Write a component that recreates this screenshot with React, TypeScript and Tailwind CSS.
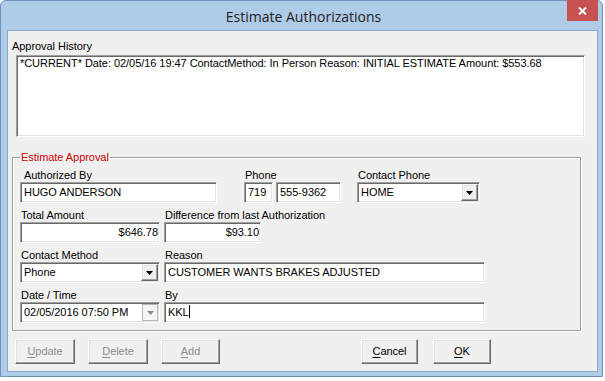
const sunken =
  "bg-white border border-t-[#a0a0a0] border-l-[#a0a0a0] border-b-white border-r-white shadow-[inset_1px_1px_0_#696969,inset_-1px_-1px_0_#e3e3e3]";
const raised =
  "bg-[#f0f0f0] border border-t-white border-l-white border-b-[#696969] border-r-[#696969] shadow-[inset_-1px_-1px_0_#a0a0a0,inset_1px_1px_0_#e3e3e3]";

function Field({ label, className, children }: { label: string; className?: string; children: React.ReactNode }) {
  return (
    <div className={"flex flex-col " + (className ?? "")}>
      <div className="h-[14px] leading-[14px] pl-[1px]">{label}</div>
      {children}
    </div>
  );
}

function TextBox({ value, w, right, children }: { value?: string; w: string; right?: boolean; children?: React.ReactNode }) {
  return (
    <div className={`${sunken} ${w} h-[21px] leading-[19px] whitespace-nowrap overflow-hidden ${right ? "text-right pr-[1px]" : "pl-[3px]"}`}>
      {value}
      {children}
    </div>
  );
}

function Arrow({ color }: { color: string }) {
  return (
    <svg width="7" height="4" viewBox="0 0 7 4">
      <path d="M0 0H7L3.5 4Z" fill={color} />
    </svg>
  );
}

function Combo({ value, w }: { value: string; w: string }) {
  return (
    <div className={`${sunken} ${w} h-[21px] flex p-[1px]`}>
      <div className="flex-1 pl-[2px] leading-[17px]">{value}</div>
      <div className={`${raised} w-[17px] h-[17px] flex items-center justify-center`}>
        <Arrow color="#000" />
      </div>
    </div>
  );
}

function Btn({ label, w, disabled }: { label: string; w: string; disabled?: boolean }) {
  return (
    <div className={`${raised} ${w} h-[25px] flex items-center justify-center ${disabled ? "text-[#8d8d8d]" : "text-black"}`}>
      <span>
        <span className="underline underline-offset-[2px]">{label[0]}</span>
        {label.slice(1)}
      </span>
    </div>
  );
}

export default function App() {
  return (
    <div className="w-[605px] h-[381px] bg-white font-['Liberation_Sans',Arial,sans-serif] text-[11px] tracking-[-0.05px] text-black">
      <div className="relative w-[603px] h-[377px] bg-[#aecbe8] border border-[#7193bb] rounded-t-[6px] flex flex-col">
        <div className="h-[29px] leading-[29px] pt-[1px] text-center font-['Open_Sans',sans-serif] text-[14px] tracking-normal text-[#1e1e1e] pl-[4px]">
          Estimate Authorizations
        </div>
        <div className="absolute top-[-1px] right-[4px] w-[31px] h-[21px] bg-[#c75050] flex items-center justify-center">
          <svg width="9" height="8" viewBox="0 0 9 8">
            <path d="M1 0.5L8 7.5M8 0.5L1 7.5" stroke="#fff" strokeWidth="2" />
          </svg>
        </div>

        <div className="ml-[6px] mr-[4px] h-[342px] border border-[#8da9c9] bg-[#f0f0f0] flex flex-col">
          <div className="ml-[4px] mt-[8px] h-[14px] leading-[14px]">Approval History</div>
          <div className={`${sunken} ml-[8px] mt-[2px] w-[569px] h-[82px] pl-[3px] pt-[1px] leading-[13px]`}>
            *CURRENT* Date: 02/05/16 19:47 ContactMethod: In Person Reason: INITIAL ESTIMATE Amount: $553.68
          </div>

          <fieldset className="ml-[4px] mt-[13px] w-[569px] h-[181px] border border-[#a0a0a0] shadow-[inset_1px_1px_0_#fff,1px_1px_0_#fff] px-0 pt-[4px] pb-0 m-0 min-w-0">
            <legend className="ml-[7px] px-[1px] leading-[14px] text-[#c80000]">Estimate Approval</legend>
            <div className="pl-[7px] flex flex-col gap-[5px]">
              <div className="flex">
                <Field label="Authorized By" className="[&>div:first-child]:pl-[4px]">
                  <TextBox w="w-[197px]" value="HUGO ANDERSON" />
                </Field>
                <Field label="Phone" className="ml-[27px]">
                  <div className="flex gap-[3px]">
                    <TextBox w="w-[29px]" value="719" />
                    <TextBox w="w-[65px]" value="555-9362" />
                  </div>
                </Field>
                <Field label="Contact Phone" className="ml-[16px]">
                  <Combo w="w-[123px]" value="HOME" />
                </Field>
              </div>
              <div className="flex gap-[4px]">
                <Field label="Total Amount">
                  <TextBox w="w-[140px]" value="$646.78" right />
                </Field>
                <Field label="Difference from last Authorization">
                  <TextBox w="w-[97px]" value="$93.10" right />
                </Field>
              </div>
              <div className="flex gap-[4px]">
                <Field label="Contact Method">
                  <Combo w="w-[140px]" value="Phone" />
                </Field>
                <Field label="Reason">
                  <TextBox w="w-[321px]" value="CUSTOMER WANTS BRAKES ADJUSTED" />
                </Field>
              </div>
              <div className="flex gap-[4px]">
                <Field label="Date / Time">
                  <div className={`${sunken} w-[140px] h-[21px] flex p-[1px]`}>
                    <div className="flex-1 pl-[2px] leading-[17px]">02/05/2016 07:50 PM</div>
                    <div className="w-[16px] h-[17px] border border-[#b9b9b9] bg-[#f4f4f4] flex items-center justify-center">
                      <Arrow color="#8a8a8a" />
                    </div>
                  </div>
                </Field>
                <Field label="By">
                  <TextBox w="w-[321px]">
                    <span>KKL</span>
                    <span className="inline-block w-[1px] h-[13px] bg-black align-[-2px]" />
                  </TextBox>
                </Field>
              </div>
            </div>
          </fieldset>

          <div className="flex ml-[7px] mt-[8px]">
            <Btn label="Update" w="w-[60px]" disabled />
            <div className="ml-[13px]">
              <Btn label="Delete" w="w-[60px]" disabled />
            </div>
            <div className="ml-[13px]">
              <Btn label="Add" w="w-[59px]" disabled />
            </div>
            <div className="ml-[141px]">
              <Btn label="Cancel" w="w-[57px]" />
            </div>
            <div className="ml-[15px]">
              <Btn label="OK" w="w-[58px]" />
            </div>
          </div>
        </div>
      </div>
    </div>
  );
}
